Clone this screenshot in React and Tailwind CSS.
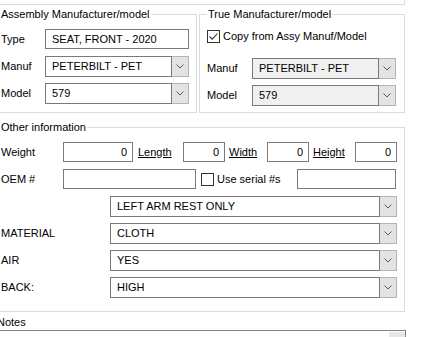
import React from "react";

function Chevron() {
  return (
    <svg width="8" height="5" viewBox="0 0 8 5" fill="none">
      <path d="M0.5 0.5 L4 4 L7.5 0.5" stroke="#5a5a5a" strokeWidth="1" />
    </svg>
  );
}

function Combo({ value, className = "", grey = false, h = "h-[21px]" }) {
  return (
    <div className={`flex ${h} ${className}`}>
      <div
        className={`flex flex-1 items-center border border-[#7a7a7a] pl-[6px] ${
          grey ? "bg-[#f0f0f0]" : "bg-white"
        }`}
      >
        {value}
      </div>
      <div className="flex w-[17px] items-center justify-center border border-l-0 border-[#b4b4b4] bg-[#e3e3e3]">
        <Chevron />
      </div>
    </div>
  );
}

function TextBox({ value = "", className = "", right = false }) {
  return (
    <div
      className={`flex h-[20px] items-center border border-[#7a7a7a] bg-white ${
        right ? "justify-end pr-[5px]" : "pl-[6px]"
      } ${className}`}
    >
      {value}
    </div>
  );
}

function Check({ checked = false }) {
  return (
    <div className="flex h-[13px] w-[13px] shrink-0 items-center justify-center border border-[#333] bg-white">
      {checked && (
        <svg width="11" height="11" viewBox="0 0 11 11" fill="none">
          <path d="M1.5 5.5 L4.2 8.2 L9.5 2.5" stroke="#333" strokeWidth="1.1" />
        </svg>
      )}
    </div>
  );
}

export default function App() {
  return (
    <div className="relative h-[337px] w-[433px] overflow-hidden bg-white font-['Liberation_Sans',Arial,sans-serif] text-[11px] leading-[15px] text-black">
      <div className="h-[5px] w-[405px] border-b border-r border-[#dcdcdc]" />

      <div className="mt-[2px] flex">
        <fieldset className="-ml-[9px] h-[106px] w-[206px] border border-[#dcdcdc] pl-[8px]">
          <legend className="px-[1px]">Assembly Manufacturer/model</legend>
          <div className="mt-[7px] flex items-center">
            <span className="w-[45px] pl-[1px]">Type</span>
            <TextBox value="SEAT, FRONT - 2020" className="w-[144px]" />
          </div>
          <div className="mt-[7px] flex items-center">
            <span className="w-[45px] pl-[1px]">Manuf</span>
            <Combo value="PETERBILT - PET" className="w-[144px]" />
          </div>
          <div className="mt-[6px] flex items-center">
            <span className="w-[45px] pl-[1px]">Model</span>
            <Combo value="579" className="w-[144px]" />
          </div>
        </fieldset>

        <fieldset className="ml-[2px] h-[106px] w-[206px] border border-[#dcdcdc] pl-[7px]">
          <legend className="px-[1px]">True Manufacturer/model</legend>
          <div className="mt-[7px] flex items-center">
            <Check checked />
            <span className="ml-[3px]">Copy from Assy Manuf/Model</span>
          </div>
          <div className="mt-[14px] flex items-center">
            <span className="w-[45px]">Manuf</span>
            <Combo value="PETERBILT - PET" className="w-[144px]" grey />
          </div>
          <div className="mt-[6px] flex items-center">
            <span className="w-[45px]">Model</span>
            <Combo value="579" className="w-[144px]" grey />
          </div>
        </fieldset>
      </div>

      <fieldset className="-ml-[9px] mt-[7px] h-[192px] w-[414px] border border-[#dcdcdc] pl-[8px]">
        <legend className="px-[1px]">Other information</legend>
        <div className="mt-[7px] flex items-center">
          <span className="w-[63px] pl-[1px]">Weight</span>
          <TextBox value="0" right className="w-[70px]" />
          <span className="ml-[5px] w-[45px] underline">Length</span>
          <TextBox value="0" right className="w-[42px]" />
          <span className="ml-[4px] w-[38px] underline">Width</span>
          <TextBox value="0" right className="w-[42px]" />
          <span className="ml-[4px] w-[42px] underline">Height</span>
          <TextBox value="0" right className="w-[42px]" />
        </div>
        <div className="mt-[7px] flex items-center">
          <span className="w-[63px] pl-[1px]">OEM #</span>
          <TextBox className="w-[133px]" />
          <div className="ml-[5px]">
            <Check />
          </div>
          <span className="ml-[3px] w-[80px]">Use serial #s</span>
          <TextBox className="w-[99px]" />
        </div>
        <div className="mt-[7px] flex items-center">
          <span className="w-[110px]" />
          <Combo value="LEFT ARM REST ONLY" className="w-[287px]" />
        </div>
        <div className="mt-[6px] flex items-center">
          <span className="w-[110px] pl-[1px]">MATERIAL</span>
          <Combo value="CLOTH" className="w-[287px]" />
        </div>
        <div className="mt-[6px] flex items-center">
          <span className="w-[110px] pl-[1px]">AIR</span>
          <Combo value="YES" className="w-[287px]" />
        </div>
        <div className="mt-[6px] flex items-center">
          <span className="w-[110px] pl-[1px]">BACK:</span>
          <Combo value="HIGH" className="w-[287px]" />
        </div>
      </fieldset>

      <div className="-ml-[3px] mt-[3px] h-[15px]">Notes</div>
      <div className="flex h-[20px] w-[406px] justify-end border-r border-t border-[#828282]">
        <div className="mt-[1px] w-[16px] bg-[#e8e8e8]" />
      </div>
    </div>
  );
}
